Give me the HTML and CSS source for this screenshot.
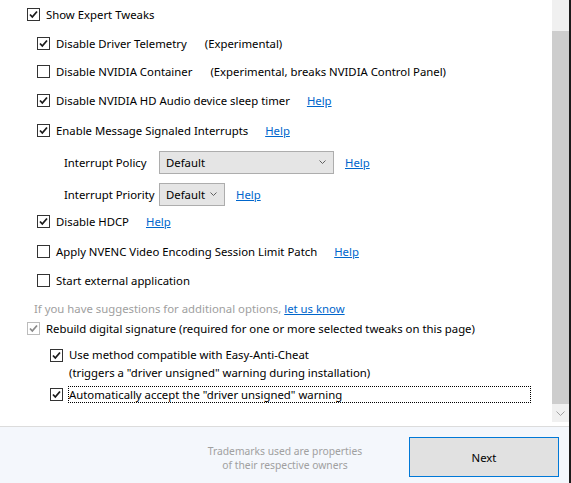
FILE: index.html
```html
<!DOCTYPE html>
<html>
<head>
  <meta charset="utf-8">
  <title>Tweaks</title>
  <link rel="stylesheet" href="styles.css">
</head>
<body>
  <div class="window">
    <div class="main">
      <div class="content">
        <div class="row top1 lvl0">
          <span class="box on"><svg viewBox="0 0 11 11"><path d="M2 5.5 L4.3 8 L9 2.5"/></svg></span>
          <span>Show Expert Tweaks</span>
        </div>
        <div class="row gap9 lvl1">
          <span class="box on"><svg viewBox="0 0 11 11"><path d="M2 5.5 L4.3 8 L9 2.5"/></svg></span>
          <span>Disable Driver Telemetry</span><span class="note">(Experimental)</span>
        </div>
        <div class="row gap8 lvl1">
          <span class="box"></span>
          <span>Disable NVIDIA Container</span><span class="note">(Experimental, breaks NVIDIA Control Panel)</span>
        </div>
        <div class="row gap9 lvl1">
          <span class="box on"><svg viewBox="0 0 11 11"><path d="M2 5.5 L4.3 8 L9 2.5"/></svg></span>
          <span>Disable NVIDIA HD Audio device sleep timer</span><a class="help" href="#">Help</a>
        </div>
        <div class="row gap10 lvl1">
          <span class="box on"><svg viewBox="0 0 11 11"><path d="M2 5.5 L4.3 8 L9 2.5"/></svg></span>
          <span>Enable Message Signaled Interrupts</span><a class="help" href="#">Help</a>
        </div>
        <div class="row sel-row gap10 lvl2">
          <span class="label">Interrupt Policy</span>
          <span class="select wide">Default<svg viewBox="0 0 7 4"><path d="M0.5 0.5 L3.5 3.5 L6.5 0.5"/></svg></span>
          <a class="help" href="#">Help</a>
        </div>
        <div class="row sel-row gap8 lvl2">
          <span class="label">Interrupt Priority</span>
          <span class="select narrow">Default<svg viewBox="0 0 7 4"><path d="M0.5 0.5 L3.5 3.5 L6.5 0.5"/></svg></span>
          <a class="help" href="#">Help</a>
        </div>
        <div class="row gap5 lvl1">
          <span class="box on"><svg viewBox="0 0 11 11"><path d="M2 5.5 L4.3 8 L9 2.5"/></svg></span>
          <span>Disable HDCP</span><a class="help" href="#">Help</a>
        </div>
        <div class="row gap10 lvl1">
          <span class="box"></span>
          <span>Apply NVENC Video Encoding Session Limit Patch</span><a class="help" href="#">Help</a>
        </div>
        <div class="row gap9 lvl1">
          <span class="box"></span>
          <span>Start external application</span>
        </div>
        <div class="row gap8 hint">
          <span>If you have suggestions for additional options,&nbsp;</span><a href="#">let us know</a>
        </div>
        <div class="row lvl0">
          <span class="box dim"><svg viewBox="0 0 11 11"><path d="M2 5.5 L4.3 8 L9 2.5"/></svg></span>
          <span>Rebuild digital signature (required for one or more selected tweaks on this page)</span>
        </div>
        <div class="multi gap8 lvl3">
          <span class="box on"><svg viewBox="0 0 11 11"><path d="M2 5.5 L4.3 8 L9 2.5"/></svg></span>
          <span>Use method compatible with Easy-Anti-Cheat<br>(triggers a "driver unsigned" warning during installation)</span>
        </div>
        <div class="row short gap3 lvl3">
          <span class="box on"><svg viewBox="0 0 11 11"><path d="M2 5.5 L4.3 8 L9 2.5"/></svg></span>
          <span class="focus">Automatically accept the "driver unsigned" warning</span>
        </div>
      </div>
      <div class="scrollbar">
        <div class="track"></div>
        <div class="thumb"></div>
        <div class="arrow"><svg viewBox="0 0 9 5"><path d="M0.5 0.5 L4.5 4.5 L8.5 0.5"/></svg></div>
      </div>
    </div>
    <div class="footer">
      <div class="trademark">Trademarks used are properties<br>of their respective owners</div>
      <button class="next">Next</button>
    </div>
  </div>
</body>
</html>
```

FILE: styles.css
```css
html, body {
  margin: 0;
  padding: 0;
  background: #ffffff;
}
body {
  font-family: "Noto Sans", "Open Sans", sans-serif;
  font-size: 11.35px;
  color: #000000;
}
.window {
  width: 569px;
  height: 483px;
  border-right: 2px solid #1b1b1b;
  display: flex;
  flex-direction: column;
}
.main {
  height: 426px;
  display: flex;
  border-bottom: 1px solid #dcdcdc;
}
.content {
  flex: 1;
  display: flex;
  flex-direction: column;
}

/* rows */
.row {
  display: flex;
  align-items: center;
  height: 20px;
  white-space: nowrap;
}
.row.short { height: 18px; }
.sel-row { height: 24px; }
.multi {
  display: flex;
  align-items: flex-start;
  line-height: 18px;
  white-space: nowrap;
}
.multi .box { margin-top: 3px; }
.top1 { margin-top: 4px; }
.gap3 { margin-top: 3px; }
.gap5 { margin-top: 5px; }
.gap8 { margin-top: 8px; }
.gap9 { margin-top: 9px; }
.gap10 { margin-top: 10px; }
.lvl0 { padding-left: 27px; }
.lvl1 { padding-left: 37px; }
.lvl2 { padding-left: 64px; }
.lvl3 { padding-left: 50px; }

.box {
  width: 11px;
  height: 11px;
  border: 1px solid #333333;
  background: #ffffff;
  margin-right: 6px;
  flex: none;
  display: flex;
}
.box svg {
  width: 11px;
  height: 11px;
  fill: none;
  stroke: none;
}
.box.on svg, .box.dim svg {
  stroke: #1a1a1a;
  stroke-width: 1.8;
}
.box.dim {
  border-color: #bcbcbc;
}
.box.dim svg {
  stroke: #8a8a8a;
}

.note { margin-left: 18px; }
.help, .hint a {
  color: #0066cc;
  text-decoration: underline;
}
.help { margin-left: 17px; }
.hint {
  padding-left: 34px;
  color: #a0a0a0;
}

.label { width: 95px; }
.select {
  box-sizing: border-box;
  height: 23px;
  border: 1px solid #adadad;
  background: #e5e5e5;
  display: flex;
  align-items: center;
  justify-content: space-between;
  padding: 0 7px 0 6px;
}
.select svg {
  width: 7px;
  height: 4px;
  fill: none;
  stroke: #606060;
  stroke-width: 1;
}
.select.wide { width: 175px; }
.select.narrow { width: 66px; }
.select + .help { margin-left: 11px; }

.focus {
  box-sizing: border-box;
  width: 463px;
  height: 17px;
  line-height: 15px;
  border: 1px dotted #000000;
  margin-left: -1px;
}

/* scrollbar */
.scrollbar {
  width: 17px;
  height: 422px;
  display: flex;
  flex-direction: column;
  background: #f0f0f0;
}
.track { height: 31px; }
.thumb {
  height: 373px;
  background: #cdcdcd;
}
.arrow {
  flex: 1;
  display: flex;
  align-items: center;
  justify-content: center;
}
.arrow svg {
  width: 9px;
  height: 5px;
  fill: none;
  stroke: #a3a3a3;
  stroke-width: 1;
}

/* footer */
.footer {
  flex: 1;
  background: #f4f7fc;
  display: flex;
  align-items: flex-start;
}
.trademark {
  width: 180px;
  margin-left: 195px;
  margin-top: 17px;
  text-align: center;
  color: #a0a0a0;
  font-size: 10.3px;
  line-height: 14px;
}
.next {
  margin: 10px 10px 0 auto;
  width: 150px;
  height: 40px;
  border: 1px solid #0078d7;
  background: #e1e1e1;
  font-family: inherit;
  font-size: 11.35px;
  color: #000000;
}
```
